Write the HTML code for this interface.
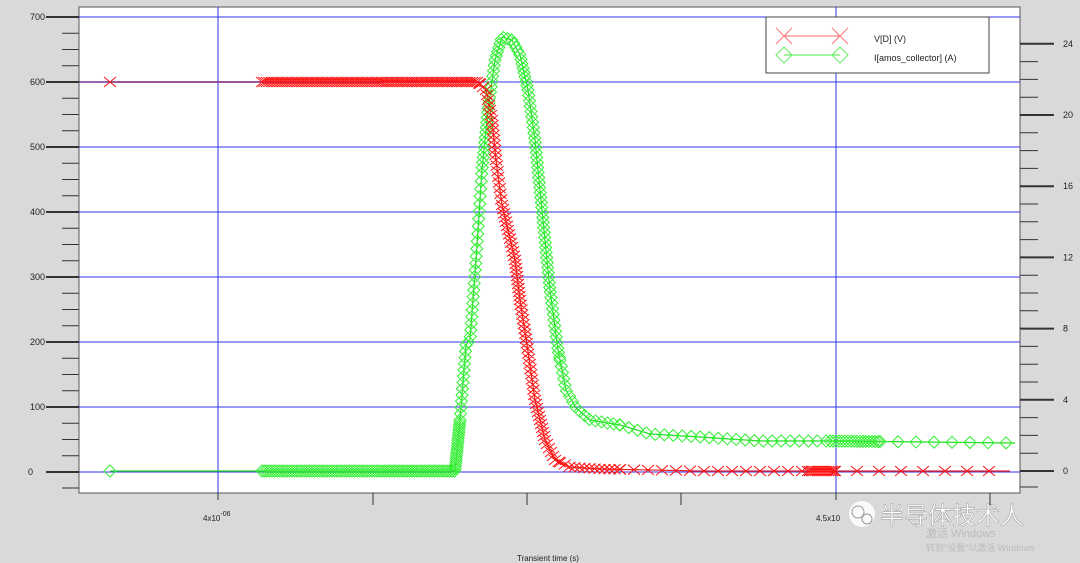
<!DOCTYPE html>
<html><head><meta charset="utf-8"><style>
html,body{margin:0;padding:0;background:#d9d9d9;width:1080px;height:563px;overflow:hidden;font-family:"Liberation Sans","Noto Sans CJK SC",sans-serif}
svg{display:block}
</style></head><body>
<svg id="s" width="1080" height="563" xmlns="http://www.w3.org/2000/svg" font-family="Liberation Sans, Noto Sans CJK SC, sans-serif">
<rect width="1080" height="563" fill="#d9d9d9"/>
<rect x="79" y="7" width="941" height="486" fill="#fff" stroke="#555" stroke-width="1"/>
<g id="grid" stroke="#3333ee" stroke-width="1"></g>
<g id="ticks" stroke="#333"></g>
<g id="lab" font-size="9" fill="#222"></g>
<g id="curves"></g>
<rect x="766" y="17" width="223" height="56" fill="#fff" stroke="#444"/>
<line x1="784" y1="36" x2="840" y2="36" stroke="#f66"/>
<path d="M776 28l16 16M792 28l-16 16M832 28l16 16M848 28l-16 16" stroke="#f77"/>
<line x1="784" y1="55" x2="840" y2="55" stroke="#4e4"/>
<path d="M776 55l8-8 8 8-8 8zM832 55l8-8 8 8-8 8z" fill="none" stroke="#6e6"/>
<text x="874" y="42" font-size="9" fill="#222">V[D] (V)</text>
<text x="874" y="61" font-size="9" fill="#222">I[amos_collector] (A)</text>
<text x="517" y="561" font-size="8" fill="#222">Transient time (s)</text>
<text x="203" y="521" font-size="8" fill="#222">4x10<tspan dy="-5" font-size="7">-06</tspan></text>
<text x="816" y="521" font-size="8" fill="#222">4.5x10</text>
<circle cx="862" cy="514" r="13" fill="#fff" opacity=".85"/>
<circle cx="858" cy="512" r="6" fill="none" stroke="#999"/>
<circle cx="867" cy="519" r="5" fill="none" stroke="#999"/>
<text x="880" y="524" font-size="24" fill="#fff" stroke="#888" stroke-width=".4">半导体技术人</text>
<text x="926" y="537" font-size="11" fill="#bbb">激活 Windows</text>
<text x="926" y="551" font-size="9" fill="#bbb">转到"设置"以激活 Windows</text>
</svg>
<script>
var NS="http://www.w3.org/2000/svg";
function el(p,t,a,txt){var e=document.createElementNS(NS,t);for(var k in a)e.setAttribute(k,a[k]);if(txt!=null)e.textContent=txt;document.getElementById(p).appendChild(e);return e;}
for(var i=0;i<=7;i++){var y=472-65*i;el('grid','line',{x1:79,x2:1020,y1:y,y2:y});
el('ticks','line',{x1:46,x2:79,y1:y,y2:y,'stroke-width':2});
el('lab','text',{x:i?30:28,y:y+3},String(i*100));
if(i<7)for(var j=1;j<4;j++){var yy=y-j*16.25;el('ticks','line',{x1:62,x2:79,y1:yy,y2:yy});}}
el('ticks','line',{x1:62,x2:79,y1:488,y2:488});
[218,836].forEach(function(x){el('grid','line',{x1:x,x2:x,y1:7,y2:493});});
[218,373,527,681,836,990].forEach(function(x,k){el('ticks','line',{x1:x,x2:x,y1:493,y2:(k==0||k==4)?500:505,'stroke-width':1});});
for(var i=0;i<=6;i++){var y=471-71.2*i;el('ticks','line',{x1:1020,x2:1054,y1:y,y2:y,'stroke-width':2});
el('lab','text',{x:1063,y:y+3},String(i*4));
if(i<6)for(var j=1;j<4;j++){var yy=y-j*17.8;el('ticks','line',{x1:1020,x2:1038,y1:yy,y2:yy});}}
el('ticks','line',{x1:1020,x2:1038,y1:487,y2:487});
var red=[[110,82],[478,82],[486,90],[492,120],[496,160],[502,205],[508,230],[515,260],[520,300],[527,345],[535,400],[545,440],[555,460],[570,467],[600,469],[700,471],[1010,471]];
var grn=[[110,471],[455,471],[460,420],[466,345],[470,340],[476,260],[482,170],[488,110],[495,60],[502,37],[512,40],[520,55],[528,90],[535,140],[542,210],[550,290],[558,350],[566,390],[576,408],[590,420],[620,425],[650,434],[700,437],[760,441],[830,441],[1015,443]];
function interp(pts,x){for(var i=1;i<pts.length;i++)if(x<=pts[i][0]){var a=pts[i-1],b=pts[i];var t=(x-a[0])/(b[0]-a[0]||1);return a[1]+t*(b[1]-a[1]);}return pts[pts.length-1][1];}
function pl(pts,c){el('curves','polyline',{points:pts.map(function(p){return p.join(',')}).join(' '),fill:'none',stroke:c,'stroke-width':1.2});}
pl(grn,'#2d2');pl(red,'#e22');
el('curves','line',{x1:79,x2:480,y1:82,y2:82,stroke:'#7a3090','stroke-width':1.5});
function marks(pts,c,type,ranges){var d='';ranges.forEach(function(r){
 var prev=null;var s=[];for(var xx=r[0];xx<=r[1];xx+=0.25)s.push([xx,interp(pts,xx)]);
 var acc=r[2];for(var k=0;k<s.length;k++){if(prev){acc+=Math.hypot(s[k][0]-prev[0],s[k][1]-prev[1]);}prev=s[k];
 if(acc>=r[2]){acc=0;var X=s[k][0],Y=s[k][1];
 if(type=='x')d+='M'+(X-6)+' '+(Y-5)+'l12 10M'+(X+6)+' '+(Y-5)+'l-12 10';
 else d+='M'+(X-6)+' '+Y+'l6-6 6 6-6 6z';}}});
 el('curves','path',{d:d,fill:'none',stroke:c,'stroke-width':1});}
marks(grn,'#3e3','d',[[110,111,100],[262,460,2.5],[460,560,4],[560,620,6],[620,830,9],[830,880,3],[880,1015,18]]);
marks(red,'#f11','x',[[110,111,100],[262,480,2.5],[480,560,4],[560,620,5],[620,830,14],[808,835,2],[835,1010,22]]);
</script>
</body></html>
